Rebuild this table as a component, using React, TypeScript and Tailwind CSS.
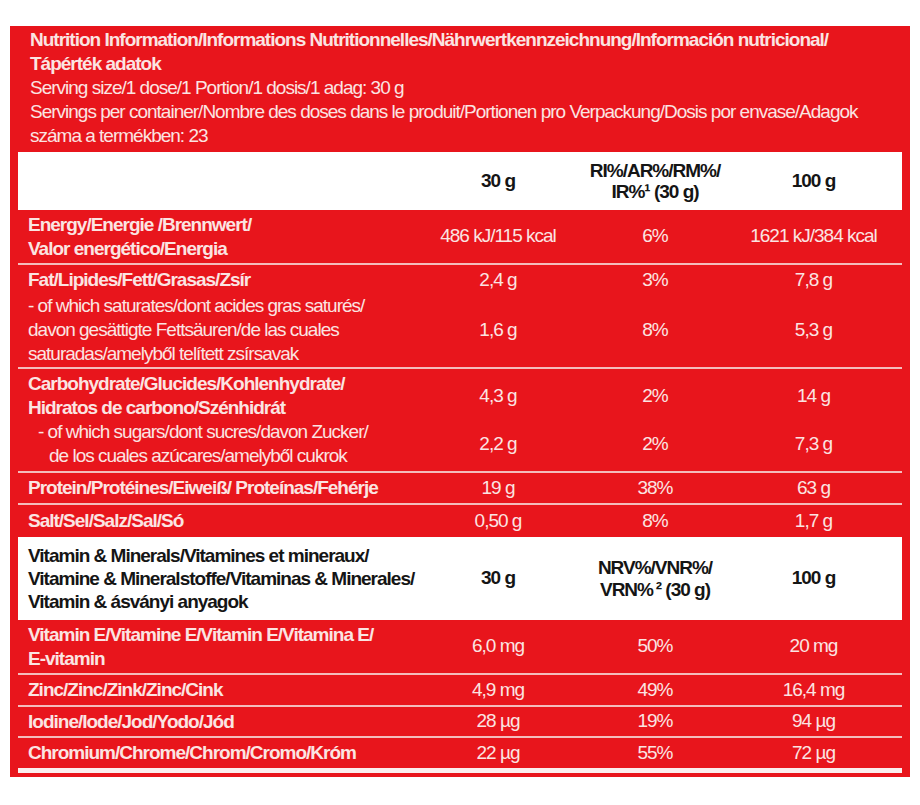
import type { ReactNode } from "react";

type Part = {
  lines: ReactNode[];
  vals: [string, string, string];
  bold?: boolean;
};

type Row = { parts: Part[]; h: string; last?: boolean };

const rows: Row[] = [
  {
    h: "h-[55px]",
    parts: [
      {
        bold: true,
        lines: ["Energy/Energie /Brennwert/", "Valor energético/Energia"],
        vals: ["486 kJ/115 kcal", "6%", "1621 kJ/384 kcal"],
      },
    ],
  },
  {
    h: "h-[104px]",
    parts: [
      { bold: true, lines: ["Fat/Lipides/Fett/Grasas/Zsír"], vals: ["2,4 g", "3%", "7,8 g"] },
      {
        lines: [
          "- of which saturates/dont acides gras saturés/",
          "davon gesättigte Fettsäuren/de las cuales",
          "saturadas/amelyből telített zsírsavak",
        ],
        vals: ["1,6 g", "8%", "5,3 g"],
      },
    ],
  },
  {
    h: "h-[104px]",
    parts: [
      {
        bold: true,
        lines: ["Carbohydrate/Glucides/Kohlenhydrate/", "Hidratos de carbono/Szénhidrát"],
        vals: ["4,3 g", "2%", "14 g"],
      },
      {
        lines: [
          <span className="pl-[10px]">- of which sugars/dont sucres/davon Zucker/</span>,
          <span className="pl-[21px]">de los cuales azúcares/amelyből cukrok</span>,
        ],
        vals: ["2,2 g", "2%", "7,3 g"],
      },
    ],
  },
  {
    h: "h-[32px]",
    parts: [{ bold: true, lines: ["Protein/Protéines/Eiweiß/ Proteínas/Fehérje"], vals: ["19 g", "38%", "63 g"] }],
  },
  {
    h: "h-[32px]",
    last: true,
    parts: [{ bold: true, lines: ["Salt/Sel/Salz/Sal/Só"], vals: ["0,50 g", "8%", "1,7 g"] }],
  },
];

const minerals: Row[] = [
  {
    h: "h-[55px]",
    parts: [
      { bold: true, lines: ["Vitamin E/Vitamine E/Vitamin E/Vitamina E/", "E-vitamin"], vals: ["6,0 mg", "50%", "20 mg"] },
    ],
  },
  { h: "h-[32px]", parts: [{ bold: true, lines: ["Zinc/Zinc/Zink/Zinc/Cink"], vals: ["4,9 mg", "49%", "16,4 mg"] }] },
  { h: "h-[31px]", parts: [{ bold: true, lines: ["Iodine/Iode/Jod/Yodo/Jód"], vals: ["28 µg", "19%", "94 µg"] }] },
  {
    h: "h-[30px]",
    last: true,
    parts: [{ bold: true, lines: ["Chromium/Chrome/Chrom/Cromo/Króm"], vals: ["22 µg", "55%", "72 µg"] }],
  },
];

const cols = "grid grid-cols-[402px_156px_158px_159px] items-center";

function TableRow({ row }: { row: Row }) {
  return (
    <div className={`${row.h} flex flex-col justify-center ${row.last ? "" : "border-b-2 border-[#f4bcbc]"}`}>
      {row.parts.map((p, i) => (
        <div key={i} className={cols}>
          <div className={`whitespace-nowrap pl-[10px] leading-[24px] ${p.bold ? "font-bold" : ""}`}>
            {p.lines.map((l, j) => (
              <div key={j}>{l}</div>
            ))}
          </div>
          {p.vals.map((v, j) => (
            <div key={j} className="text-center">
              {v}
            </div>
          ))}
        </div>
      ))}
    </div>
  );
}

export default function App() {
  return (
    <div
      className="min-h-[805px] w-[920px] bg-white pt-[26px] text-[19px] tracking-[-1px]"
      style={{ fontFamily: '"Liberation Sans", Arial, sans-serif' }}
    >
      <div className="mx-[10px] w-[900px] bg-[#e8151c] px-[8px] pt-[2px] pb-[4px] text-[#fbe4e2]">
        <div className="whitespace-nowrap px-[12px] leading-[24px]">
          <div className="font-bold">
            Nutrition Information/Informations Nutritionnelles/Nährwertkennzeichnung/Información nutricional/
            <br />
            Tápérték adatok
          </div>
          <div>Serving size/1 dose/1 Portion/1 dosis/1 adag: 30 g</div>
          <div>
            Servings per container/Nombre des doses dans le produit/Portionen pro Verpackung/Dosis por envase/Adagok
            <br />
            száma a termékben: 23
          </div>
        </div>

        <div className={`${cols} mt-[4px] h-[58px] bg-white font-bold text-[#151515]`}>
          <div />
          <div className="text-center">30 g</div>
          <div className="text-center leading-[21px]">
            RI%/AR%/RM%/
            <br />
            IR%¹ (30 g)
          </div>
          <div className="text-center">100 g</div>
        </div>

        {rows.map((r, i) => (
          <TableRow key={i} row={r} />
        ))}

        <div className={`${cols} h-[83px] bg-white font-bold text-[#151515]`}>
          <div className="whitespace-nowrap pl-[10px] leading-[23px]">
            Vitamin &amp; Minerals/Vitamines et mineraux/
            <br />
            Vitamine &amp; Mineralstoffe/Vitaminas &amp; Minerales/
            <br />
            Vitamin &amp; ásványi anyagok
          </div>
          <div className="text-center">30 g</div>
          <div className="text-center leading-[22px]">
            NRV%/VNR%/
            <br />
            VRN%&thinsp;² (30 g)
          </div>
          <div className="text-center">100 g</div>
        </div>

        {minerals.map((r, i) => (
          <TableRow key={i} row={r} />
        ))}

        <div className="h-[5px] bg-[#fbeeee]" />
      </div>
    </div>
  );
}
